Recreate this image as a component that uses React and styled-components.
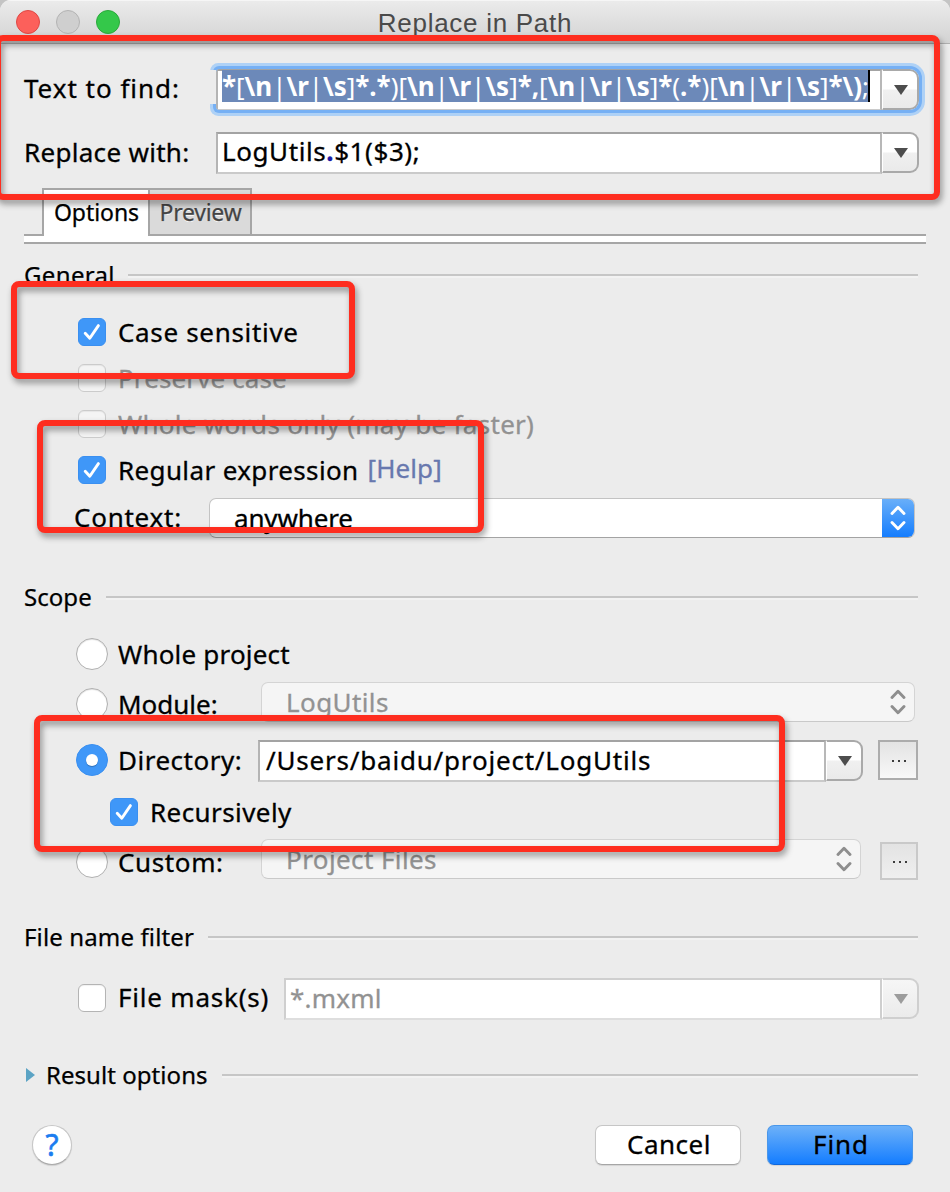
import React from 'react';
import styled, { createGlobalStyle, css } from 'styled-components';

const GlobalStyle = createGlobalStyle`
  * { box-sizing: border-box; }
  body {
    margin: 0;
    background: #c4c4c4;
    font-family: "Noto Sans", "Open Sans", sans-serif;
    color: #000;
  }
`;

const Window = styled.div`
  position: relative;
  width: 950px;
  height: 1192px;
  overflow: hidden;
  background: #ececec;
  border-radius: 11px 11px 0 0;
`;

const TitleBar = styled.header`
  display: flex;
  align-items: center;
  height: 44px;
  padding-left: 16px;
  background: linear-gradient(#ebebeb, #d3d3d3);
  border-top: 1px solid #f6f6f6;
  border-bottom: 1px solid #b0b0b0;
`;

const Lights = styled.div`
  display: flex;
  gap: 16px;
  width: 104px;
`;

const Light = styled.span`
  width: 24px;
  height: 24px;
  border-radius: 50%;
  background: ${p => p.$fill};
  border: 1px solid ${p => p.$edge};
`;

const Title = styled.h1`
  flex: 1;
  margin: 0 104px 0 -5px;
  padding-right: 11px;
  padding-top: 1px;
  text-align: center;
  white-space: nowrap;
  font: 400 26px/30px "Liberation Sans", Arial, sans-serif;
  letter-spacing: 0.72px;
  color: #4a4a4a;
`;

const Text = styled.span`
  flex: none;
  font-size: 26px;
  line-height: 36px;
  white-space: pre;
  -webkit-text-stroke: 0.3px currentColor;
  letter-spacing: ${p => p.$track || 0}px;
  ${p => p.$lift && css`padding-bottom: ${p.$lift * 2}px;`}
  color: ${p => (p.$muted ? '#929292' : '#000')};
`;

const HelpLink = styled(Text)`
  margin-left: 9px;
  color: #6878ae;
`;

const FieldRow = styled.div`
  display: flex;
  align-items: center;
  height: 42px;
  margin-top: ${p => p.$top}px;
  padding: 0 31px 0 24px;
`;

const FieldLabel = styled.div`
  display: flex;
  width: 192px;
`;

const ComboShell = styled.div`
  position: relative;
  display: flex;
  flex: ${p => (p.$width ? 'none' : 1)};
  width: ${p => (p.$width ? `${p.$width}px` : 'auto')};
  height: 42px;
  margin-top: ${p => (p.$width ? 2 : 0)}px;
`;

const ComboText = styled.div`
  display: flex;
  align-items: center;
  flex: 1;
  min-width: 0;
  padding-left: ${p => p.$inset}px;
  background: #fff;
  border: 2px solid;
  border-color: ${p => (p.$off ? '#cfcfcf #cfcfcf #dedede #cfcfcf' : '#a3a3a3 #b8b8b8 #cacaca #b4b4b4')};
`;

const ComboButton = styled.button`
  display: flex;
  align-items: center;
  justify-content: center;
  width: 37px;
  padding: 0 0 0 1px;
  margin: 0 0 1px;
  background: ${p => (p.$off ? 'linear-gradient(#f6f6f6, #ebebeb)' : 'linear-gradient(#fff 48%, #f0f0f0 52%, #eaeaea)')};
  border: 2px solid ${p => (p.$off ? '#cfcfcf' : '#a9a9a9')};
  border-left: 1px solid #fff;
  border-radius: 0 9px 9px 0;
`;

const FocusRing = styled.span`
  position: absolute;
  inset: 0 0 1px;
  border-radius: 3px 9px 9px 3px;
  box-shadow: 0 0 0 3px #76b0f4, 0 0 0 6px #aed1f6;
  &::before {
    content: "";
    position: absolute;
    left: -7px;
    top: 1px;
    width: 7px;
    height: 34px;
    background: #ececec;
  }
`;

const Selection = styled.div`
  align-self: flex-start;
  flex: none;
  height: 32px;
  width: 648px;
  margin-top: -1px;
  padding-top: 0;
  background: #6c89b9;
  border-right: 2px solid #000;
  white-space: pre;
  font-size: 26px;
  line-height: 32px;
  letter-spacing: ${p => p.$track}px;
  color: #fff;
  b { font-weight: 700; }
`;

const Dot = styled.b`
  color: #1a1aa6;
`;

const Tabs = styled.nav`
  display: flex;
  height: 46px;
  margin: 14px 24px 0 42px;
`;

const Tab = styled.button`
  display: flex;
  justify-content: center;
  width: ${p => p.$width}px;
  height: ${p => (p.$active ? 48 : 46)}px;
  z-index: ${p => (p.$active ? 1 : 0)};
  padding: 6px 0 0 1px;
  margin: 0;
  background: ${p => (p.$active ? '#fff' : '#dadada')};
  border: solid #a6a6a6;
  border-width: ${p => (p.$active ? '2px 2px 0 2px' : '2px 2px 0 0')};
  color: ${p => (p.$active ? '#000' : '#444')};
  font: 400 23px/32px "Noto Sans", sans-serif;
  letter-spacing: ${p => p.$track}px;
  text-shadow: ${p => (p.$active ? 'none' : '0 1px 0 #fff')};
  -webkit-text-stroke: 0.25px currentColor;
`;

const TabStrip = styled.div`
  height: 10px;
  margin: 0 24px;
  background: #fff;
  border: solid #a6a6a6;
  border-width: 2px 0;
`;

const SectionHeading = styled.h2`
  display: flex;
  align-items: center;
  height: 30px;
  margin: ${p => p.$top}px 32px 0 24px;
  font-size: 24px;
  font-weight: 400;
  letter-spacing: ${p => p.$track}px;
  white-space: nowrap;
  -webkit-text-stroke: 0.25px #000;
`;

const HeadingText = styled.span`
  width: ${p => p.$width}px;
  line-height: 30px;
`;

const Rule = styled.span`
  flex: 1;
  height: 4px;
  border-top: 2px solid #c6c6c6;
  border-bottom: 2px solid #f2f2f2;
  margin-top: 2px;
`;

const Disclosure = styled.svg`
  margin: 0 11px 0 2px;
`;

const OptionRow = styled.div`
  display: flex;
  align-items: center;
  height: ${p => p.$h || 46}px;
  margin-top: ${p => p.$top || 0}px;
  padding-left: ${p => p.$indent || 78}px;
`;

const Box = styled.span`
  display: flex;
  flex: none;
  align-items: center;
  justify-content: center;
  width: 28px;
  height: 28px;
  margin-right: 12px;
  border-radius: 6px;
  background: ${p => (p.$on ? '#3f97f8' : p.$off ? '#f4f4f4' : '#fff')};
  border: 1px solid ${p => (p.$on ? '#3a8ff0' : p.$off ? '#cbcbcb' : '#b4b4b4')};
  box-shadow: ${p => (p.$on ? 'none' : 'inset 0 1px 1px rgba(0,0,0,.06)')};
`;

const Radio = styled.span`
  display: flex;
  flex: none;
  align-items: center;
  justify-content: center;
  width: 32px;
  height: 32px;
  margin-right: 10px;
  border-radius: 50%;
  background: ${p => (p.$on ? '#3f97f8' : '#fff')};
  border: 1px solid ${p => (p.$on ? '#3a8ff0' : '#b0b0b0')};
  box-shadow: ${p => (p.$on ? 'none' : 'inset 0 1px 1px rgba(0,0,0,.12)')};
  &::after {
    content: "";
    width: 12px;
    height: 12px;
    border-radius: 50%;
    background: #fff;
    box-shadow: ${p => (p.$on ? '0 1px 1px rgba(0,0,0,.25)' : 'none')};
  }
`;

const LabelCell = styled.div`
  display: flex;
  flex: none;
  width: ${p => p.$width}px;
`;

const SelectShell = styled.div`
  display: flex;
  align-items: center;
  flex: none;
  width: ${p => p.$width}px;
  height: 40px;
  margin-bottom: ${p => p.$raise || 0}px;
  padding-left: 24px;
  border-radius: 7px;
  overflow: hidden;
  background: ${p => (p.$off ? '#f5f5f5' : '#fff')};
  border: 1px solid ${p => (p.$off ? '#d4d4d4' : '#c3c3c3')};
  border-bottom-color: ${p => (p.$off ? '#c9c9c9' : '#a3a3a3')};
`;

const SelectKnob = styled.span`
  display: flex;
  align-items: center;
  justify-content: center;
  width: 33px;
  height: 40px;
  margin: -1px -1px -1px auto;
  padding-right: 1px;
  background: ${p => (p.$off ? 'transparent' : 'linear-gradient(#6bb0f9, #137cfe)')};
`;

const BrowseButton = styled.button`
  display: flex;
  align-items: center;
  justify-content: center;
  gap: 4px;
  width: ${p => p.$size}px;
  height: ${p => p.$size}px;
  margin: 0 0 ${p => p.$raise || 0}px ${p => p.$gap}px;
  padding: 1px 0 0 1px;
  background: linear-gradient(#e3e3e3, ${p => (p.$off ? '#efefef' : '#f8f8f8')});
  border: 2px solid ${p => (p.$off ? '#c9c9c9' : '#acacac')};
`;

const Speck = styled.i`
  width: 2px;
  height: 2px;
  background: #3c3c3c;
`;

const Footer = styled.footer`
  display: flex;
  align-items: center;
  height: 40px;
  margin-top: 35px;
  padding: 0 37px 0 32px;
`;

const HelpButton = styled.button`
  width: 40px;
  height: 40px;
  margin-right: auto;
  padding: 0;
  border: 1px solid #c6c6c6;
  border-bottom-color: #aaa;
  border-radius: 50%;
  background: #fff;
  color: #1b7df0;
  font: 400 30px/36px "Noto Sans", sans-serif;
  -webkit-text-stroke: 0.6px currentColor;
  box-shadow: 0 1px 1px rgba(0,0,0,.12);
`;

const PushButton = styled.button`
  width: 146px;
  height: 40px;
  margin-left: 26px;
  padding: 0 0 2px 2px;
  border-radius: 7px;
  border: 1px solid ${p => (p.$primary ? '#4a97ea' : '#c6c6c6')};
  border-bottom-color: ${p => (p.$primary ? '#1068dc' : '#a6a6a6')};
  background: ${p => (p.$primary ? 'linear-gradient(#6db1f9, #147dff)' : '#fff')};
  box-shadow: 0 1px 1px rgba(0,0,0,.1);
  color: #000;
  font: 400 26px/36px "Noto Sans", sans-serif;
  letter-spacing: ${p => p.$track}px;
  -webkit-text-stroke: 0.3px #000;
`;

const Marker = styled.div`
  position: absolute;
  z-index: 2;
  left: ${p => p.$x}px;
  top: ${p => p.$y}px;
  width: ${p => p.$w}px;
  height: ${p => p.$h}px;
  border: 6px solid #fe2d1f;
  border-radius: 8px;
  filter: drop-shadow(2px 4px 3px rgba(0, 0, 0, 0.4));
  pointer-events: none;
`;

const Tick = () => (
  <svg width="20" height="20" viewBox="0 0 20 20" fill="none">
    <path d="M3.2 11.2 L7.8 16.2 L16.4 3.6" stroke="#fff" strokeWidth="2.9" strokeLinecap="round" strokeLinejoin="round" />
  </svg>
);

const Chevrons = ({ color }) => (
  <svg width="16" height="26" viewBox="0 0 16 26" fill="none" stroke={color} strokeWidth="2.9" strokeLinecap="round" strokeLinejoin="round">
    <path d="M2 8.4 L8 2.2 L14 8.4 M2 17.6 L8 23.8 L14 17.6" />
  </svg>
);

const Combo = ({ children, width, off, focused, inset = 4 }) => (
  <ComboShell $width={width}>
    {focused && <FocusRing />}
    <ComboText $off={off} $inset={inset}>{children}</ComboText>
    <ComboButton $off={off}>
      <svg width="14" height="10" viewBox="0 0 14 10">
        <path d="M0 0H14L7 10Z" fill={off ? '#9c9c9c' : '#4d4d4d'} />
      </svg>
    </ComboButton>
  </ComboShell>
);

const Select = ({ width, off, track, children, raise }) => (
  <SelectShell $width={width} $off={off} $raise={raise}>
    <Text $muted={off} $track={track}>{children}</Text>
    <SelectKnob $off={off}><Chevrons color={off ? '#8e8e8e' : '#fff'} /></SelectKnob>
  </SelectShell>
);

const Browse = props => (
  <BrowseButton {...props}><Speck /><Speck /><Speck /></BrowseButton>
);

const Section = ({ top, width, track, arrow, children }) => (
  <SectionHeading $top={top} $track={track}>
    {arrow && (
      <Disclosure width="9" height="14" viewBox="0 0 9 14"><path d="M0 0L9 7L0 14Z" fill="#5ba3c4" /></Disclosure>
    )}
    <HeadingText $width={width}>{children}</HeadingText>
    <Rule />
  </SectionHeading>
);

const pattern = '*[\\n|\\r|\\s]*.*)[\\n|\\r|\\s]*,[\\n|\\r|\\s]*(.*)[\\n|\\r|\\s]*\\);';
const runs = pattern.match(/\\\)|[[\]()|;]+|(?:\\[nrs]|[*.,\\])(?:\\[nrs]|[*.,])*/g);

export default function App() {
  return (
    <>
      <GlobalStyle />
      <Window>
        <TitleBar>
          <Lights>
            <Light $fill="#fc605b" $edge="#df4744" />
            <Light $fill="#cfcfcf" $edge="#b3b3b3" />
            <Light $fill="#34c84a" $edge="#2aa93b" />
          </Lights>
          <Title>Replace in Path</Title>
        </TitleBar>

        <FieldRow $top={25}>
          <FieldLabel><Text $track={0.98} $lift={2}>Text to find:</Text></FieldLabel>
          <Combo focused>
            <Selection $track={-0.05}>
              {runs.map((run, i) => (/^[[\]()|;]/.test(run) ? <span key={i}>{run}</span> : <b key={i}>{run}</b>))}
            </Selection>
          </Combo>
        </FieldRow>
        <FieldRow $top={21}>
          <FieldLabel><Text $track={0.3} $lift={1}>Replace with:</Text></FieldLabel>
          <Combo>
            <Text $track={0.58} $lift={2}>LogUtils<Dot>.</Dot>$1($3);</Text>
          </Combo>
        </FieldRow>

        <Tabs>
          <Tab $active $width={108} $track={-0.05}>Options</Tab>
          <Tab $width={102} $track={-0.25}>Preview</Tab>
        </Tabs>
        <TabStrip />

        <Section top={16} width={104} track={0.35}>General</Section>
        <OptionRow $top={19}>
          <Box $on><Tick /></Box><Text $track={0.67}>Case sensitive</Text>
        </OptionRow>
        <OptionRow>
          <Box $off /><Text $muted $track={0.12}>Preserve case</Text>
        </OptionRow>
        <OptionRow>
          <Box $off /><Text $muted $track={0.29}>Whole words only (may be faster)</Text>
        </OptionRow>
        <OptionRow>
          <Box $on><Tick /></Box><Text $track={0.37}>Regular expression</Text>
          <HelpLink $track={0.1} $lift={2}>[Help]</HelpLink>
        </OptionRow>
        <OptionRow $h={50} $indent={74}>
          <LabelCell $width={135}><Text $track={0.75} $lift={1}>Context:</Text></LabelCell>
          <Select width={706} track={-0.15}>anywhere</Select>
        </OptionRow>

        <Section top={39} width={82} track={0.05}>Scope</Section>
        <OptionRow $top={17} $h={50} $indent={76}>
          <Radio /><Text $track={0.2}>Whole project</Text>
        </OptionRow>
        <OptionRow $h={50} $indent={76}>
          <Radio /><LabelCell $width={143}><Text $track={0}>Module:</Text></LabelCell>
          <Select width={654} off track={0.4} raise={4}>LogUtils</Select>
        </OptionRow>
        <OptionRow $h={50} $top={6} $indent={76}>
          <Radio $on /><LabelCell $width={140}><Text $track={0.5}>Directory:</Text></LabelCell>
          <Combo width={605} inset={6}>
            <Text $track={0.8} $lift={1}>/Users/baidu/project/LogUtils</Text>
          </Combo>
          <Browse $size={40} $gap={15} />
        </OptionRow>
        <OptionRow $h={50} $top={2} $indent={110}>
          <Box $on><Tick /></Box><Text $track={0.42}>Recursively</Text>
        </OptionRow>
        <OptionRow $h={50} $indent={76}>
          <Radio /><LabelCell $width={143}><Text $track={0.62}>Custom:</Text></LabelCell>
          <Select width={600} off track={0.4} raise={6}>Project Files</Select>
          <Browse $size={38} $gap={19} $raise={2} $off />
        </OptionRow>

        <Section top={35} width={184} track={0.13}>File name filter</Section>
        <OptionRow $h={50} $top={21} $indent={78}>
          <Box /><LabelCell $width={166}><Text $track={0.8} $lift={1}>File mask(s)</Text></LabelCell>
          <Combo width={635} off>
            <Text $muted $track={0.2} $lift={1}>*.mxml</Text>
          </Combo>
        </OptionRow>

        <Section top={37} width={176} track={0.05} arrow>Result options</Section>

        <Footer>
          <HelpButton>?</HelpButton>
          <PushButton $track={0.5}>Cancel</PushButton>
          <PushButton $primary $track={0.9}>Find</PushButton>
        </Footer>

        <Marker $x={-5} $y={35} $w={945} $h={165} />
        <Marker $x={11} $y={281} $w={344} $h={98} />
        <Marker $x={37} $y={420} $w={447} $h={113} />
        <Marker $x={34} $y={715} $w={751} $h={137} />
      </Window>
    </>
  );
}
